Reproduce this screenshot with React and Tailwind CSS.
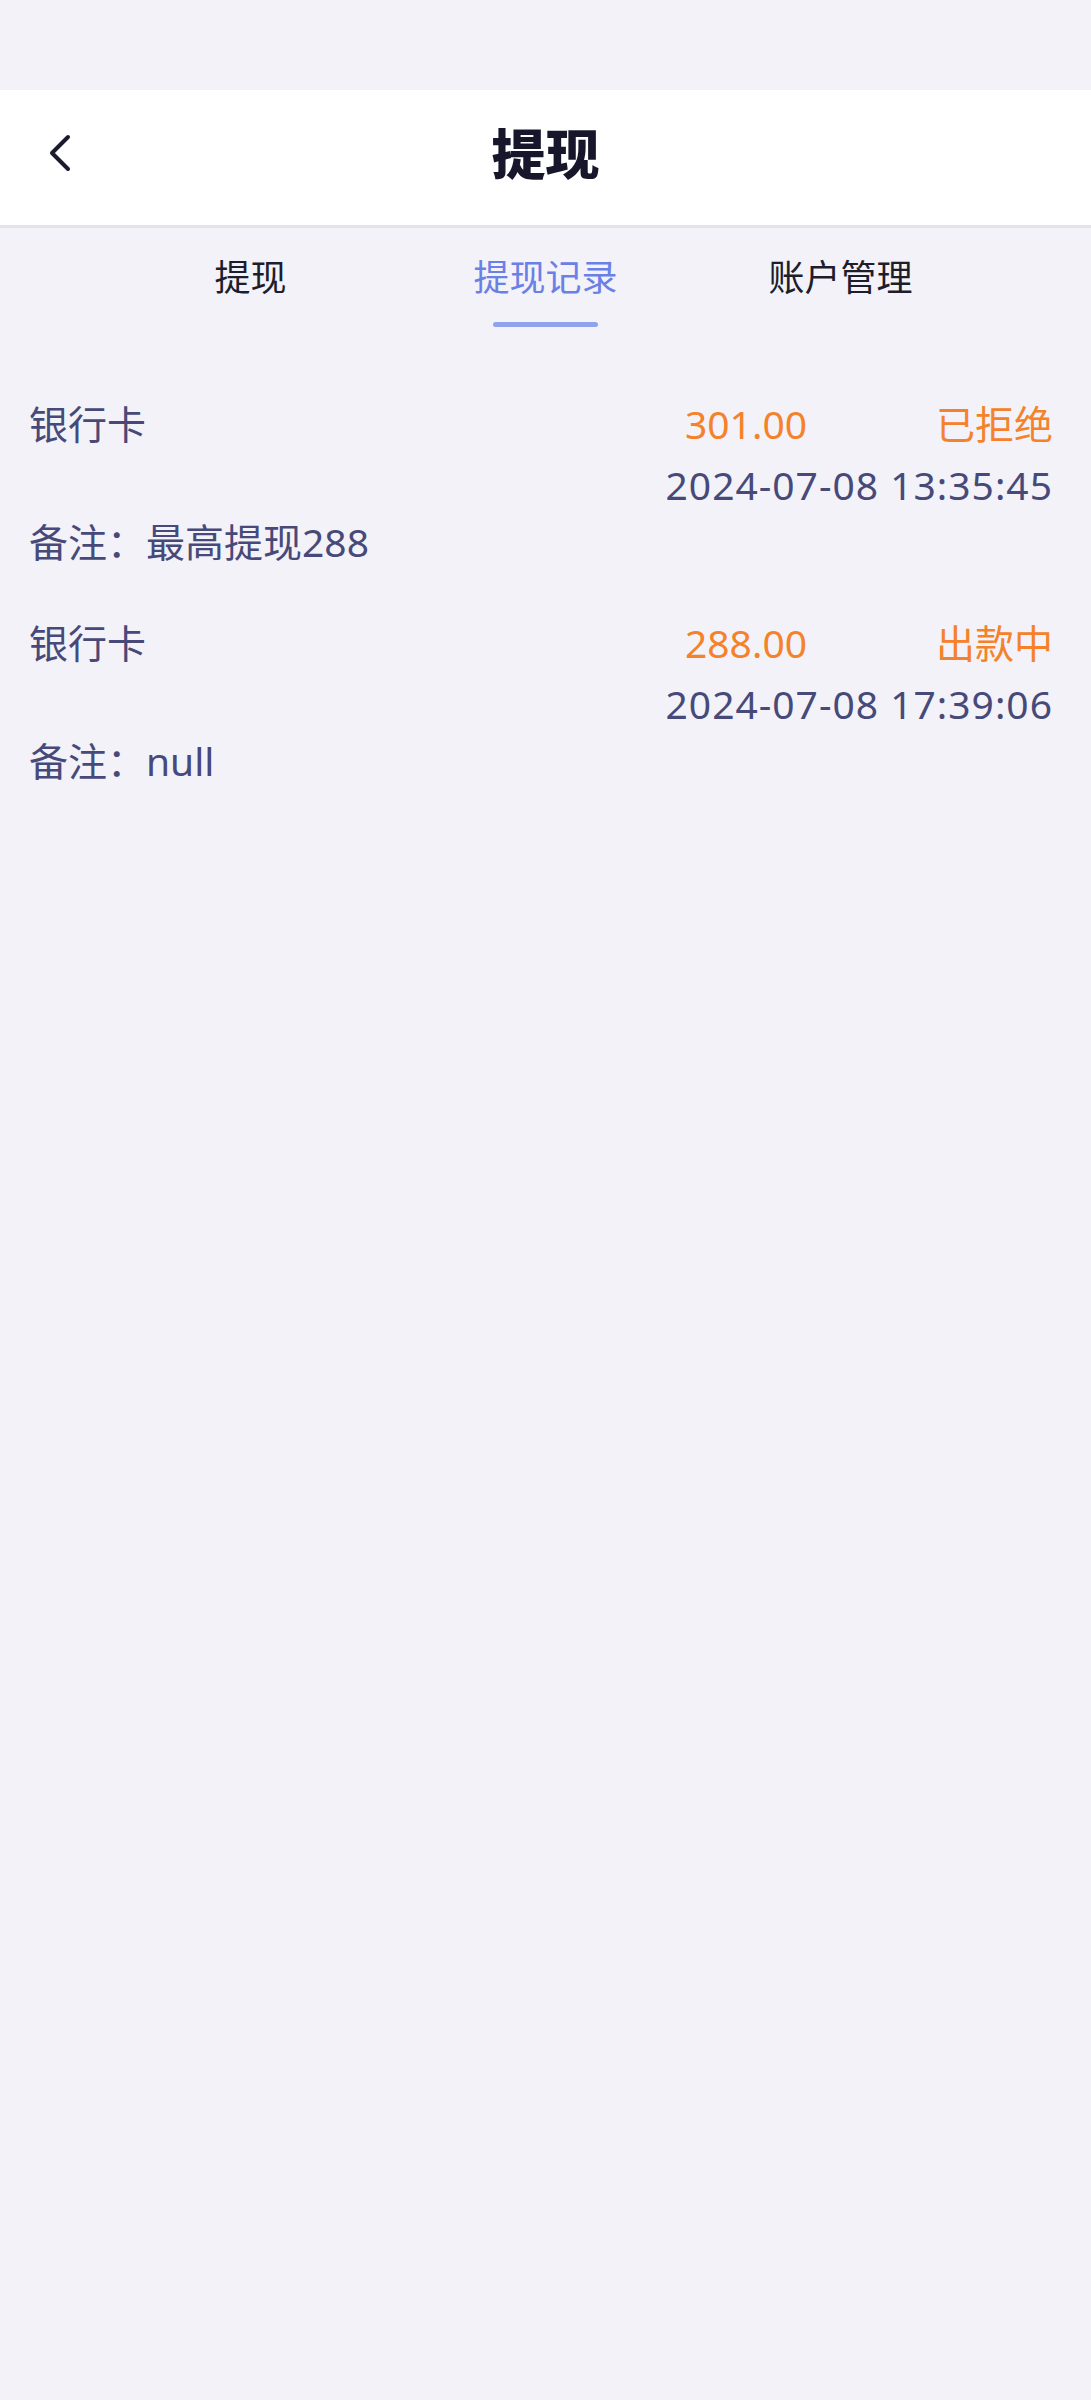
import React from "react";

const records = [
  { type: "银行卡", amount: "301.00", status: "已拒绝", time: "2024-07-08 13:35:45", note: "最高提现288" },
  { type: "银行卡", amount: "288.00", status: "出款中", time: "2024-07-08 17:39:06", note: "null" },
];

export default function App() {
  return (
    <div
      className="min-h-[2400px] w-full bg-[#f2f2f8]"
      style={{ fontFamily: '"Noto Sans", "Noto Sans CJK SC", sans-serif' }}
    >
      <div className="h-[90px]" />
      <div className="relative flex h-[138px] items-center justify-center border-b-[3px] border-[#e4e4ea] bg-white">
        <svg
          className="absolute left-[47px] top-[44px]"
          width="26"
          height="38"
          viewBox="0 0 26 38"
          fill="none"
        >
          <polyline
            points="21,3 5,19 21,35"
            stroke="#1c1b2e"
            strokeWidth="4"
            strokeLinecap="round"
            strokeLinejoin="round"
          />
        </svg>
        <span
          className="mb-[12px] text-[54px] font-black leading-none text-[#17162b]"
          style={{ fontFamily: '"Noto Sans CJK SC", sans-serif' }}
        >
          提现
        </span>
      </div>

      <div className="mx-auto grid w-[885px] grid-cols-3 pt-[22px]">
        {["提现", "提现记录", "账户管理"].map((t, i) => (
          <div key={t} className="flex flex-col items-center">
            <span
              className={
                "text-[36px] leading-[50px] " +
                (i === 1 ? "text-[#6a80e6]" : "text-[#1d1d2b]")
              }
              style={{ fontFamily: '"Noto Sans CJK SC", sans-serif' }}
            >
              {t}
            </span>
            <div
              className={
                "mt-[22px] h-[5px] w-[105px] rounded-full " +
                (i === 1 ? "bg-[#8fa3ee]" : "bg-transparent")
              }
            />
          </div>
        ))}
      </div>

      <div className="mt-[67px] flex flex-col gap-[45px]">
        {records.map((r, idx) => (
          <div key={idx} className="pl-[29px] pr-[38px] text-[39px] text-[#474a78]">
            <div className="flex h-[60px] items-center">
              <span>{r.type}</span>
              <span className="ml-auto text-[39px] text-[#f5822a]">{r.amount}</span>
              <span className="w-[246px] text-right text-[#f5822a]">{r.status}</span>
            </div>
            <div className="flex h-[62px] items-center justify-end">
              <span className="tracking-[1px]">{r.time}</span>
            </div>
            <div className="flex h-[52px] items-center">
              <span>备注：{r.note}</span>
            </div>
          </div>
        ))}
      </div>
    </div>
  );
}
